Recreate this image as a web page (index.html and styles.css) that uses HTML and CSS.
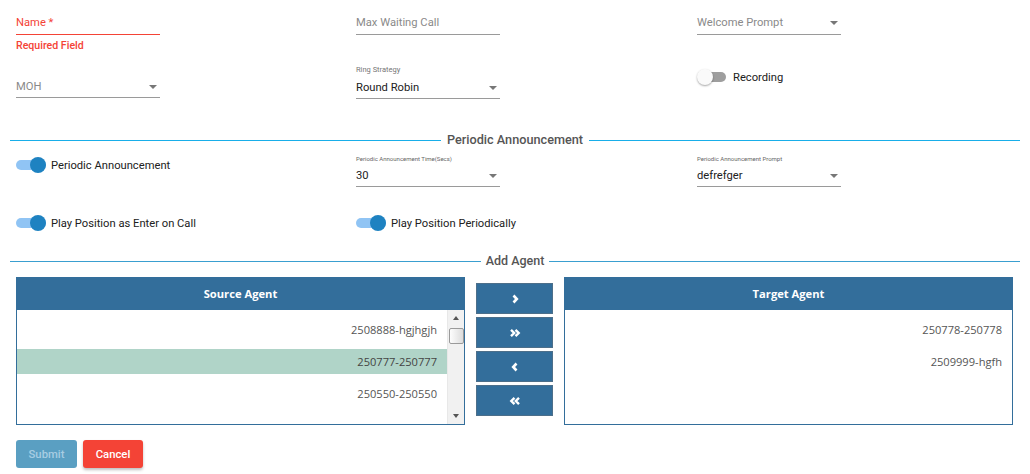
FILE: index.html
```html
<!DOCTYPE html>
<html>
<head>
<meta charset="utf-8">
<link rel="stylesheet" href="styles.css">
</head>
<body>
<div class="page">
  <div class="grid row-a">
    <div class="col">
      <div class="field invalid"><span class="ph">Name *</span></div>
      <div class="err">Required Field</div>
    </div>
    <div class="col">
      <div class="field"><span class="ph">Max Waiting Call</span></div>
    </div>
    <div class="col">
      <div class="field select"><span class="ph">Welcome Prompt</span><i class="caret"></i></div>
    </div>
  </div>

  <div class="grid row-b">
    <div class="col">
      <div class="field select pt14"><span class="ph">MOH</span><i class="caret"></i></div>
    </div>
    <div class="col">
      <div class="mini">Ring Strategy</div>
      <div class="field select val"><span class="v">Round Robin</span><i class="caret"></i></div>
    </div>
    <div class="col">
      <div class="toggle-row rec">
        <span class="toggle off"><span class="thumb"></span></span>
        <span class="tlabel">Recording</span>
      </div>
    </div>
  </div>

  <div class="divider d1"><span class="line"></span><span class="dtext">Periodic Announcement</span><span class="line"></span></div>

  <div class="grid row-c">
    <div class="col">
      <div class="toggle-row t-c">
        <span class="toggle on"><span class="thumb"></span></span>
        <span class="tlabel">Periodic Announcement</span>
      </div>
    </div>
    <div class="col">
      <div class="tiny">Periodic Announcement Time(Secs)</div>
      <div class="field select val2"><span class="v">30</span><i class="caret"></i></div>
    </div>
    <div class="col">
      <div class="tiny">Periodic Announcement Prompt</div>
      <div class="field select val2"><span class="v">defrefger</span><i class="caret"></i></div>
    </div>
  </div>

  <div class="grid row-d">
    <div class="col">
      <div class="toggle-row">
        <span class="toggle on"><span class="thumb"></span></span>
        <span class="tlabel">Play Position as Enter on Call</span>
      </div>
    </div>
    <div class="col">
      <div class="toggle-row">
        <span class="toggle on"><span class="thumb"></span></span>
        <span class="tlabel">Play Position Periodically</span>
      </div>
    </div>
    <div class="col"></div>
  </div>

  <div class="divider d2"><span class="line"></span><span class="dtext">Add Agent</span><span class="line"></span></div>

  <div class="picklist">
    <div class="plbox">
      <div class="plhead">Source Agent</div>
      <div class="plbody">
        <div class="items">
          <div class="item">2508888-hgjhgjh</div>
          <div class="item sel">250777-250777</div>
          <div class="item">250550-250550</div>
        </div>
        <div class="sbar">
          <span class="sb-up"></span>
          <span class="sb-thumb"></span>
          <span class="sb-fill"></span>
          <span class="sb-down"></span>
        </div>
      </div>
    </div>
    <div class="plbtns">
      <button class="pbtn"><svg width="8" height="10" viewBox="0 0 8 10"><polyline points="2.5,1.5 5.8,5 2.5,8.5" fill="none" stroke="#fff" stroke-width="2.6"/></svg></button>
      <button class="pbtn"><svg width="12" height="10" viewBox="0 0 12 10"><polyline points="2,1.8 5.2,5 2,8.2" fill="none" stroke="#fff" stroke-width="2.4"/><polyline points="6.5,1.8 9.7,5 6.5,8.2" fill="none" stroke="#fff" stroke-width="2.4"/></svg></button>
      <button class="pbtn"><svg width="8" height="10" viewBox="0 0 8 10"><polyline points="5.5,1.5 2.2,5 5.5,8.5" fill="none" stroke="#fff" stroke-width="2.6"/></svg></button>
      <button class="pbtn"><svg width="12" height="10" viewBox="0 0 12 10"><polyline points="5.5,1.8 2.3,5 5.5,8.2" fill="none" stroke="#fff" stroke-width="2.4"/><polyline points="10,1.8 6.8,5 10,8.2" fill="none" stroke="#fff" stroke-width="2.4"/></svg></button>
    </div>
    <div class="plbox">
      <div class="plhead">Target Agent</div>
      <div class="plbody">
        <div class="items target">
          <div class="item">250778-250778</div>
          <div class="item">2509999-hgfh</div>
        </div>
      </div>
    </div>
  </div>

  <div class="actions">
    <button class="btn submit">Submit</button>
    <button class="btn cancel">Cancel</button>
  </div>
</div>
</body>
</html>
```

FILE: styles.css
```css
* { box-sizing: border-box; }
html, body { margin: 0; padding: 0; background: #fff; }
body { font-family: Roboto, "Liberation Sans", sans-serif; color: #212121; }

.page { width: 1030px; height: 474px; padding: 0 10px; overflow: hidden; }

.grid { display: grid; grid-template-columns: 340px 341px 1fr; padding-left: 6px; }
.col { min-width: 0; }

.row-a { padding-top: 16px; }
.row-b { margin-top: 13px; }
.row-c { margin-top: 0; }
.row-d { margin-top: 28px; }

.field {
  width: 144px;
  position: relative;
  font-size: 11.2px;
  line-height: 14px;
  padding-bottom: 4px;
  border-bottom: 1px solid #9a9a9a;
  height: 19px;
}
.field .ph { color: #8a8a8a; display: block; }
.field .v { color: #212121; display: block; }
.field.invalid { border-bottom-color: #f44336; }
.field.invalid .ph { color: #f44336; }
.field.select .caret {
  position: absolute;
  right: 3px;
  top: 5px;
  width: 0; height: 0;
  border-left: 4px solid transparent;
  border-right: 4px solid transparent;
  border-top: 4px solid #777;
}
.field.pt14 { height: 33px; padding-top: 15px; padding-bottom: 4px; }
.field.pt14 .caret { top: 20px; }
.field.val { margin-top: 6px; height: 18px; padding-bottom: 3px; }
.field.val2 { margin-top: 6px; height: 18px; padding-bottom: 3px; }

.err { color: #f44336; font-size: 10.6px; font-weight: 500; line-height: 12px; margin-top: 5px; }

.mini { font-size: 7.5px; line-height: 10px; color: #777; }
.tiny { font-size: 6px; line-height: 8px; color: #666; margin-top: 7px; }

.toggle-row { display: flex; align-items: center; height: 16px; }
.toggle-row.rec { margin-top: 4px; }
.toggle-row.t-c { margin-top: 9px; }
.toggle { position: relative; width: 30px; height: 16px; display: inline-block; flex: none; }
.toggle::before {
  content: ""; position: absolute; left: 0; top: 3px; width: 30px; height: 10px; border-radius: 5px;
}
.toggle.on::before { background: #90c4f4; }
.toggle.off::before { background: #9e9e9e; left: 6px; width: 23px; }
.toggle .thumb {
  position: absolute; top: 0; width: 16px; height: 16px; border-radius: 50%;
}
.toggle.on .thumb { right: 0; background: #1e82c1; }
.toggle.off .thumb { left: 0; background: #fafafa; box-shadow: 0 1px 2px rgba(0,0,0,0.35); }
.tlabel { font-size: 11.2px; margin-left: 5px; color: #212121; white-space: nowrap; }
.rec .tlabel { margin-left: 6px; }

.divider { display: flex; align-items: center; height: 16px; }
.divider .line { flex: 1; height: 1px; }
.divider .dtext { font-size: 12.7px; font-weight: 500; color: #555; padding: 0 6px; line-height: 16px; }
.d1 { margin-top: 33px; }
.d1 .line { background: #18aee9; }
.d2 { margin-top: 22px; }
.d2 .line { background: #3a9fd0; }
.d2 .dtext { font-size: 12.5px; padding: 0 5px; }

.picklist { display: flex; margin-top: 8px; padding-left: 6px; align-items: flex-start; }
.plbox { width: 449px; height: 148px; border: 1px solid #336e9b; display: flex; flex-direction: column; }
.plhead {
  background: #336e9b; color: #fff; margin: -1px -1px 0; height: 33px;
  font-family: "Open Sans", sans-serif; font-weight: 700; font-size: 11.2px;
  display: flex; align-items: center; justify-content: center;
}
.plbody { flex: 1; display: flex; position: relative; }
.items { flex: 1; padding-top: 7px; display: flex; flex-direction: column; gap: 7px; }
.item {
  height: 25px; line-height: 25px; text-align: right; padding-right: 10px;
  font-family: "Open Sans", sans-serif; font-size: 11.1px; color: #555;
}
.item.sel { background: #b0d4c8; color: #444; }
.items.target { padding-top: 7px; }
.items.target .item { padding-right: 10px; }

.sbar { width: 17px; background: #f1f1f1; display: flex; flex-direction: column; align-items: center; border-left: 1px solid #e8e8e8; }
.sb-up, .sb-down { width: 0; height: 0; border-left: 3.5px solid transparent; border-right: 3.5px solid transparent; }
.sb-up { border-bottom: 4px solid #555; margin-top: 6px; }
.sb-down { border-top: 4px solid #555; margin-bottom: 6px; }
.sb-thumb { width: 15px; height: 16px; margin-top: 8px; background: linear-gradient(to right, #fdfdfd, #dcdcdc); border: 1px solid #9a9a9a; border-radius: 2px; }
.sb-fill { flex: 1; }

.plbtns { width: 77px; margin: 6px 11px 0; display: flex; flex-direction: column; gap: 3px; }
.pbtn {
  height: 31px; width: 77px; background: #336e9b; border: 1px solid #4d6f8a; padding: 0;
  display: flex; align-items: center; justify-content: center;
}

.actions { display: flex; gap: 6px; padding-left: 6px; margin-top: 15px; }
.btn {
  height: 28px; border: none; border-radius: 3px; font-family: Roboto, sans-serif;
  font-size: 11.3px; font-weight: 500; padding: 0;
}
.submit { width: 61px; background: #5a9fc2; color: #a7cde2; }
.cancel { width: 60px; background: #f44336; color: #fff; box-shadow: 0 2px 3px rgba(0,0,0,0.25); }
```
